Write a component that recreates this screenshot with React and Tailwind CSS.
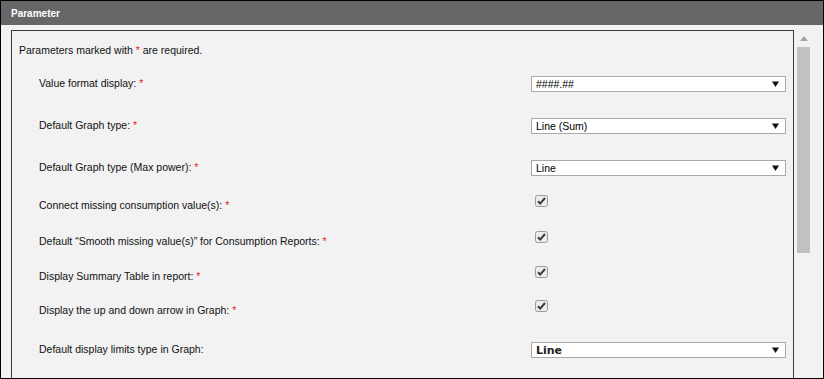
import React from 'react';

const Req = () => <span className="text-[#e8202a]"> *</span>;

function Arrow() {
  return (
    <svg width="7" height="6" viewBox="0 0 7 6" className="shrink-0">
      <path d="M0 0.5 H7 L3.5 6 Z" fill="#111" />
    </svg>
  );
}

function Select({ value, strong }) {
  return (
    <div className="w-[255px] h-[16px] bg-white border border-[#a9a9a9] flex items-center justify-between pl-[4px] pr-[6px]">
      <span
        className={
          strong
            ? "text-[11px] font-bold text-[#222] font-['DejaVu_Sans',sans-serif] leading-none"
            : 'text-[10.5px] text-black leading-none'
        }
      >
        {value}
      </span>
      <Arrow />
    </div>
  );
}

function Check() {
  return (
    <svg width="13" height="12" viewBox="0 0 13 12" className="ml-[4px] mb-[11px]">
      <rect x="0.5" y="0.5" width="12" height="11" rx="2" fill="#ececec" stroke="#9a9a9a" />
      <path d="M3 6.2 L5.2 8.6 L10 3" fill="none" stroke="#3a3a3a" strokeWidth="2" />
    </svg>
  );
}

const rows = [
  { label: 'Value format display:', req: true, ctrl: <Select value="####.##" />, mt: 'mt-[13px]' },
  { label: 'Default Graph type:', req: true, ctrl: <Select value="Line (Sum)" />, mt: 'mt-[22px]' },
  { label: 'Default Graph type (Max power):', req: true, ctrl: <Select value="Line" />, mt: 'mt-[22px]' },
  { label: 'Connect missing consumption value(s):', req: true, ctrl: <Check />, mt: 'mt-[18px]' },
  { label: 'Default \u201cSmooth missing value(s)\u201d for Consumption Reports:', req: true, ctrl: <Check />, mt: 'mt-[16px]' },
  { label: 'Display Summary Table in report:', req: true, ctrl: <Check />, mt: 'mt-[15px]' },
  { label: 'Display the up and down arrow in Graph:', req: true, ctrl: <Check />, mt: 'mt-[14px]' },
  { label: 'Default display limits type in Graph:', req: false, ctrl: <Select value="Line" strong />, mt: 'mt-[19px]' },
];

export default function App() {
  return (
    <div className="w-[824px] h-[379px] border border-black bg-[#f2f2f2] flex flex-col overflow-hidden font-['Liberation_Sans',Arial,sans-serif] text-[10.5px] text-[#111]">
      <div className="h-[24px] shrink-0 bg-[#666666] flex items-center pl-[10px]">
        <span className="text-white font-bold text-[10px]">Parameter</span>
      </div>
      <div className="flex flex-1 min-h-0">
        <div className="flex-1 pl-[10px] pt-[5px] min-h-0 overflow-hidden">
          <div className="w-[783px] h-[400px] border-l border-t border-r border-[#3a3a3a]">
            <div className="h-[20px] mt-[10px] pl-[7px] flex items-center">
              <span>
                Parameters marked with <span className="text-[#e8202a]">*</span> are required.
              </span>
            </div>
            {rows.map((r) => (
              <div key={r.label} className={`h-[20px] flex items-center ${r.mt}`}>
                <div className="w-[519px] pl-[27px] shrink-0">
                  {r.label}
                  {r.req && <Req />}
                </div>
                {r.ctrl}
              </div>
            ))}
          </div>
        </div>
        <div className="w-[28px] shrink-0 flex flex-col pt-[11px] pl-[2px]">
          <div className="w-[13px] flex justify-center">
            <svg width="8" height="5" viewBox="0 0 8 5">
              <path d="M0 5 L4 0 L8 5 Z" fill="#a3a3a3" />
            </svg>
          </div>
          <div className="w-[13px] h-[206px] mt-[6px] bg-[#c1c1c1]" />
        </div>
      </div>
    </div>
  );
}
